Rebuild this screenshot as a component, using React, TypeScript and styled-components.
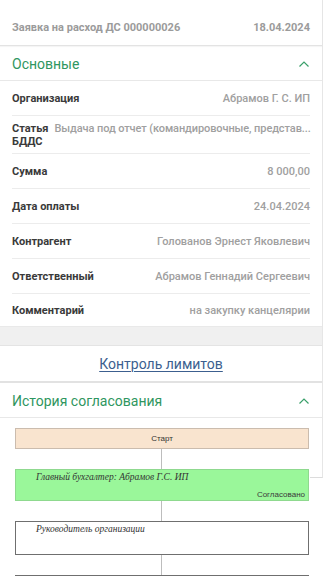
import styled, { createGlobalStyle } from 'styled-components';

const GlobalStyle = createGlobalStyle`
  html, body {
    margin: 0;
    padding: 0;
    background: #fff;
  }
  body {
    font-family: Roboto, 'Noto Sans', sans-serif;
    -webkit-font-smoothing: antialiased;
  }
`;

const fields = [
  { label: 'Организация', value: 'Абрамов Г. С. ИП' },
  { label: 'Статья БДДС', value: 'Выдача под отчет (командировочные, представ...', wrap: true },
  { label: 'Сумма', value: '8 000,00' },
  { label: 'Дата оплаты', value: '24.04.2024' },
  { label: 'Контрагент', value: 'Голованов Эрнест Яковлевич' },
  { label: 'Ответственный', value: 'Абрамов Геннадий Сергеевич' },
  { label: 'Комментарий', value: 'на закупку канцелярии' },
];

const Screen = styled.div`
  width: 324px;
  height: 576px;
  overflow: hidden;
  position: relative;
`;

const Top = styled.div`
  width: 322px;
  border-right: 1px solid #e6e6e6;
`;

const DocHeader = styled.div`
  height: 46px;
  box-sizing: border-box;
  padding: 21px 12px 0;
  display: flex;
  justify-content: space-between;
  align-items: flex-start;
  font-size: 11px;
  font-weight: 700;
  line-height: 14px;
  color: #9b9b9b;
  border-bottom: 1px solid #e3e3e3;
  box-shadow: 0 1px 1px rgba(0, 0, 0, 0.04);
`;

const SectionHeader = styled.div`
  height: 35px;
  box-sizing: border-box;
  padding: 1px 12px 0;
  display: flex;
  align-items: center;
  justify-content: space-between;
  border-bottom: 1px solid #e8e8e8;
`;

const SectionTitle = styled.span`
  font-size: 14px;
  color: #2f9660;
`;

const Rows = styled.div`
  padding: 0 12px;
`;

const Row = styled.div<{ $tall?: boolean; $last?: boolean }>`
  height: ${(p) => (p.$tall ? 38 : p.$last ? 32 : 35)}px;
  box-sizing: border-box;
  display: flex;
  align-items: center;
  gap: ${(p) => (p.$tall ? 6 : 8)}px;
  border-bottom: ${(p) => (p.$last ? 'none' : '1px solid #ececec')};
`;

const Label = styled.div<{ $narrow?: boolean }>`
  flex: ${(p) => (p.$narrow ? '0 0 36px' : '0 0 auto')};
  font-size: 11px;
  line-height: 13px;
  font-weight: 700;
  color: #3a3a3a;
`;

const Value = styled.div<{ $top?: boolean }>`
  flex: 1;
  min-width: 0;
  text-align: right;
  font-size: 11px;
  line-height: 13px;
  font-weight: 500;
  color: #a0a0a0;
  white-space: nowrap;
  align-self: ${(p) => (p.$top ? 'flex-start' : 'auto')};
  padding-top: ${(p) => (p.$top ? '6px' : '0')};
  letter-spacing: ${(p) => (p.$top ? '-0.1px' : '0')};
`;

const Band = styled.div`
  height: 20px;
  box-sizing: border-box;
  background: #f0f0f0;
  border-top: 1px solid #e9e9e9;
  border-bottom: 1px solid #e4e4e4;
`;

const LinkBar = styled.div`
  height: 37px;
  box-sizing: border-box;
  padding-top: 1px;
  display: flex;
  align-items: center;
  justify-content: center;
  border-bottom: 2px solid #e2e2e2;
`;

const LimitLink = styled.a`
  font-size: 14px;
  color: #3c5f8f;
  text-decoration: underline;
  text-underline-offset: 2px;
  text-decoration-thickness: 1px;
`;

const Diagram = styled.div`
  position: relative;
  padding: 10px 0 0 15px;
`;

const CanvasEdge = styled.div`
  position: absolute;
  top: 0;
  right: 1px;
  width: 12px;
  height: 59px;
  border-right: 1px solid #e6e6e6;
  border-bottom: 1px solid #dcdcdc;
`;

const Node = styled.div<{ $kind: 'start' | 'done' | 'todo'; $h: number }>`
  width: 294px;
  height: ${(p) => p.$h}px;
  box-sizing: border-box;
  position: relative;
  background: ${(p) => (p.$kind === 'start' ? '#f9e4cf' : p.$kind === 'done' ? '#9af79a' : '#fff')};
  border: 1px solid
    ${(p) => (p.$kind === 'start' ? '#cbbcae' : p.$kind === 'done' ? '#8fd98f' : '#6f6f6f')};
  display: flex;
  flex-direction: column;
  justify-content: ${(p) => (p.$kind === 'start' ? 'center' : 'space-between')};
  align-items: ${(p) => (p.$kind === 'start' ? 'center' : 'stretch')};
`;

const StartText = styled.span`
  font-family: 'Liberation Sans', Arial, sans-serif;
  font-size: 8px;
  color: #333;
`;

const NodeTitle = styled.span`
  font-family: 'Liberation Serif', 'Times New Roman', serif;
  font-style: italic;
  font-size: 9.5px;
  color: #333;
  padding: 2px 0 0 20px;
`;

const NodeStatus = styled.span`
  font-family: 'Liberation Sans', Arial, sans-serif;
  font-size: 8px;
  color: #3a3a3a;
  text-align: right;
  padding: 0 3px 1px 0;
`;

const Connector = styled.div`
  width: 1px;
  height: 20px;
  margin-left: 146px;
  background: #bdbdbd;
`;

function Chevron() {
  return (
    <svg width="12" height="8" viewBox="0 0 12 8">
      <polyline points="1.5,6.5 6,2 10.5,6.5" fill="none" stroke="#3aa06a" strokeWidth="1.2" />
    </svg>
  );
}

export default function App() {
  return (
    <Screen>
      <GlobalStyle />
      <Top>
        <DocHeader>
          <span>Заявка на расход ДС 000000026</span>
          <span>18.04.2024</span>
        </DocHeader>
        <SectionHeader>
          <SectionTitle>Основные</SectionTitle>
          <Chevron />
        </SectionHeader>
        <Rows>
          {fields.map((f, i) => (
            <Row key={f.label} $tall={f.wrap} $last={i === fields.length - 1}>
              <Label $narrow={f.wrap}>{f.label}</Label>
              <Value $top={f.wrap}>{f.value}</Value>
            </Row>
          ))}
        </Rows>
        <Band />
        <LinkBar>
          <LimitLink>Контроль лимитов</LimitLink>
        </LinkBar>
        <SectionHeader>
          <SectionTitle>История согласования</SectionTitle>
          <Chevron />
        </SectionHeader>
      </Top>
      <Diagram>
        <CanvasEdge />
        <Node $kind="start" $h={21}>
          <StartText>Старт</StartText>
        </Node>
        <Connector />
        <Node $kind="done" $h={32}>
          <NodeTitle>Главный бухгалтер: Абрамов Г.С. ИП</NodeTitle>
          <NodeStatus>Согласовано</NodeStatus>
        </Node>
        <Connector />
        <Node $kind="todo" $h={34}>
          <NodeTitle>Руководитель организации</NodeTitle>
        </Node>
        <Connector />
        <Node $kind="todo" $h={34} />
      </Diagram>
    </Screen>
  );
}
